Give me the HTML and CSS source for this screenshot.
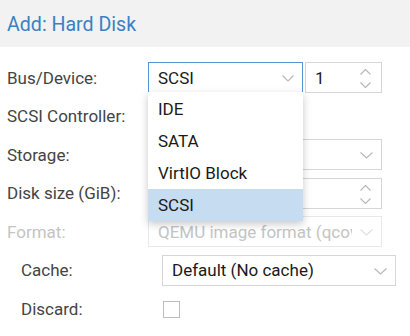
FILE: index.html
```html
<!DOCTYPE html>
<html>
<head>
<meta charset="utf-8">
<link rel="stylesheet" href="styles.css">
</head>
<body>
<div class="dialog">
  <div class="header"><span class="title">Add: Hard Disk</span></div>
  <div class="form">
    <div class="row">
      <div class="label">Bus/Device:</div>
      <div class="ctrl pair">
        <div class="dd-wrap">
          <div class="field select focus"><span class="val">SCSI</span>
            <svg class="chev" width="12" height="7" viewBox="0 0 12 7"><path d="M0.5 0.5 L6 6 L11.5 0.5" fill="none" stroke="#b8b8b8" stroke-width="1.2"/></svg>
          </div>
          <div class="menu">
            <div class="item">IDE</div>
            <div class="item">SATA</div>
            <div class="item">VirtIO Block</div>
            <div class="item sel">SCSI</div>
          </div>
        </div>
        <div class="field num"><span class="val">1</span>
          <svg class="spin" width="11" height="19" viewBox="0 0 11 19"><path d="M0.5 5.5 L5.5 0.5 L10.5 5.5 M0.5 13.5 L5.5 18.5 L10.5 13.5" fill="none" stroke="#b8b8b8" stroke-width="1.2"/></svg>
        </div>
      </div>
    </div>
    <div class="row">
      <div class="label">SCSI Controller:</div>
      <div class="ctrl"><div class="field short"></div></div>
    </div>
    <div class="row">
      <div class="label">Storage:</div>
      <div class="ctrl"><div class="field select">
        <svg class="chev" width="13" height="7" viewBox="0 0 13 7"><path d="M0.5 0.5 L6.5 6 L12.5 0.5" fill="none" stroke="#b8b8b8" stroke-width="1.2"/></svg>
      </div></div>
    </div>
    <div class="row">
      <div class="label">Disk size (GiB):</div>
      <div class="ctrl"><div class="field num">
        <svg class="spin" width="11" height="19" viewBox="0 0 11 19"><path d="M0.5 5.5 L5.5 0.5 L10.5 5.5 M0.5 13.5 L5.5 18.5 L10.5 13.5" fill="none" stroke="#b8b8b8" stroke-width="1.2"/></svg>
      </div></div>
    </div>
    <div class="row disabled">
      <div class="label">Format:</div>
      <div class="ctrl"><div class="field select"><span class="val clip">QEMU image format (qcow2)</span>
        <svg class="chev" width="13" height="7" viewBox="0 0 13 7"><path d="M0.5 0.5 L6.5 6 L12.5 0.5" fill="none" stroke="#e0e0e0" stroke-width="1.2"/></svg>
      </div></div>
    </div>
    <div class="adv">
      <div class="row">
        <div class="label">Cache:</div>
        <div class="ctrl"><div class="field select"><span class="val">Default (No cache)</span>
          <svg class="chev" width="13" height="7" viewBox="0 0 13 7"><path d="M0.5 0.5 L6.5 6 L12.5 0.5" fill="none" stroke="#b8b8b8" stroke-width="1.2"/></svg>
        </div></div>
      </div>
      <div class="row">
        <div class="label">Discard:</div>
        <div class="ctrl"><div class="check"></div></div>
      </div>
    </div>
  </div>
</div>
</body>
</html>
```
FILE: styles.css
```css
html, body {
  margin: 0;
  padding: 0;
  background: #ffffff;
  overflow: hidden;
}
body {
  font-family: Roboto, "Liberation Sans", sans-serif;
  color: #222;
  width: 410px;
  height: 336px;
}
.header {
  height: 47px;
  background: #f2f2f2;
  display: flex;
  align-items: center;
  padding-left: 7px;
}
.title {
  color: #3b80c3;
  font-size: 19.6px;
  margin-top: 1px;
}
.form {
  padding: 15px 0 0 7px;
  display: flex;
  flex-direction: column;
  gap: 7.6px;
}
.adv {
  padding-left: 14px;
  display: flex;
  flex-direction: column;
  gap: 7.6px;
}
.row {
  display: grid;
  grid-template-columns: 141px 234px;
  align-items: center;
  height: 31px;
}
.label {
  font-size: 17px;
  color: #444;
}
.disabled .label { color: #c4c4c4; }
.ctrl { position: relative; height: 31px; display: flex; align-items: center; }
.pair { display: flex; gap: 2px; }
.dd-wrap { position: relative; width: 155px; height: 31px; }
.field {
  box-sizing: border-box;
  height: 31px;
  width: 100%;
  border: 1px solid #d6d6d6;
  background: #fff;
  display: flex;
  align-items: center;
  padding-left: 9px;
  position: relative;
  font-size: 17px;
  color: #1a1a1a;
}
.field.short { width: 155px; }
.num { width: 234px; }
.pair .num { width: 77px; }
.focus { border-color: #5495d6; }
.disabled .field { border-color: #e8e8e8; color: #c4c4c4; }
.val { white-space: nowrap; }
.clip { overflow: hidden; max-width: 194px; }
.chev { position: absolute; right: 8px; top: 12px; }
.spin { position: absolute; right: 10px; top: 6px; }
.menu {
  position: absolute;
  left: 0;
  top: 30px;
  width: 155px;
  background: #fff;
  box-shadow: 0 3px 8px rgba(0,0,0,0.22);
  z-index: 10;
  padding-top: 1px;
}
.item {
  height: 32px;
  display: flex;
  align-items: center;
  padding-left: 10px;
  font-size: 17px;
  color: #1a1a1a;
}
.item.sel { background: #c5dcf1; }
.check {
  width: 17px;
  height: 17px;
  box-sizing: border-box;
  border: 1px solid #bdbdbd;
  margin-left: 1px;
}
```
